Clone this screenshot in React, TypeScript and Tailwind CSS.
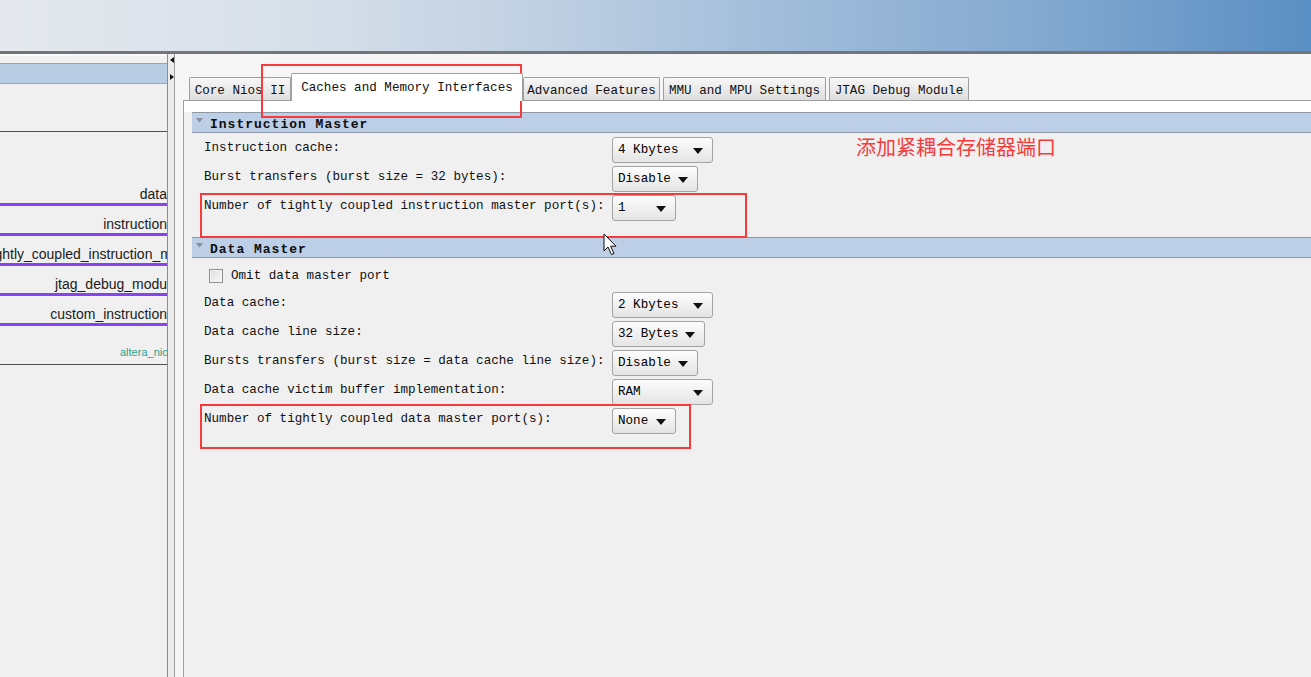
import React from 'react';

const mono = "font-['Liberation_Mono','Courier_New',monospace]";

type Row = { label: string; value: string; width: string };

const instructionRows: Row[] = [
  { label: 'Instruction cache:', value: '4 Kbytes', width: 'w-[101px]' },
  { label: 'Burst transfers (burst size = 32 bytes):', value: 'Disable', width: 'w-[86px]' },
  { label: 'Number of tightly coupled instruction master port(s):', value: '1', width: 'w-[64px]' },
];

const dataRows: Row[] = [
  { label: 'Data cache:', value: '2 Kbytes', width: 'w-[101px]' },
  { label: 'Data cache line size:', value: '32 Bytes', width: 'w-[93px]' },
  { label: 'Bursts transfers (burst size = data cache line size):', value: 'Disable', width: 'w-[86px]' },
  { label: 'Data cache victim buffer implementation:', value: 'RAM', width: 'w-[101px]' },
  { label: 'Number of tightly coupled data master port(s):', value: 'None', width: 'w-[64px]' },
];

const ports = [
  { name: 'data', clip: '' },
  { name: 'instruction', clip: '' },
  { name: 'tightly_coupled_instruction_master', clip: 'mr-[-36px]' },
  { name: 'jtag_debug_module', clip: 'mr-[-11px]' },
  { name: 'custom_instruction', clip: '' },
];

const tabs = [
  { label: 'Core Nios II', cls: 'w-[102px] ml-[3px]', active: false },
  { label: 'Caches and Memory Interfaces', cls: 'w-[232px]', active: true },
  { label: 'Advanced Features', cls: 'w-[137px]', active: false },
  { label: 'MMU and MPU Settings', cls: 'w-[163px] ml-[3px]', active: false },
  { label: 'JTAG Debug Module', cls: 'w-[140px] ml-[3px]', active: false },
];

const Dropdown = ({ value, width }: { value: string; width: string }) => (
  <div
    className={`${width} h-[26px] flex items-center justify-between pl-[5px] pr-[9px] pt-px rounded-[3px] border border-[#a3a3a3] bg-gradient-to-b from-[#fdfdfd] to-[#e4e4e4] text-black`}
  >
    <span>{value}</span>
    <svg width="10" height="6" viewBox="0 0 10 6">
      <path d="M0 0 H10 L5 6 Z" fill="#111" />
    </svg>
  </div>
);

const SectionHeader = ({ title }: { title: string }) => (
  <div className="relative h-[21px] flex items-end bg-[#bccfe6] border-y border-[#8e99a6]">
    <svg className="absolute left-[4px] top-[5px]" width="7" height="5" viewBox="0 0 7 5">
      <path d="M0 0 H7 L3.5 4.5 Z" fill="#8a8f96" />
    </svg>
    <span className="ml-[18px] text-[13px] leading-[15px] font-bold tracking-[1px] text-[#0d0d0d]">
      {title}
    </span>
  </div>
);

const SettingRow = ({ row }: { row: Row }) => (
  <div className="flex items-start h-[29px] pl-[12px]">
    <div className="w-[408px] pt-[3px] leading-[16px] whitespace-pre text-[#111]">{row.label}</div>
    <Dropdown value={row.value} width={row.width} />
  </div>
);

const Cursor = () => (
  <svg
    className="absolute left-[603px] top-[233px]"
    width="15"
    height="24"
    viewBox="0 0 15 24"
  >
    <path
      d="M1 1 L1 18 L5 14 L8.5 21.5 L11 20.5 L7.6 13.2 L13 13.2 Z"
      fill="#fff"
      stroke="#111"
      strokeWidth="1"
      strokeLinejoin="round"
    />
  </svg>
);

export default function App() {
  return (
    <div className="relative w-[1311px] h-[677px] overflow-hidden flex flex-col bg-[#f0f0f0]">
      {/* window title strip */}
      <div className="h-[51px] shrink-0 bg-[linear-gradient(to_right,#e5e9ee_0%,#d5dee8_25%,#bfcfe2_42%,#a3bedb_58%,#86aad0_78%,#5a8fc3_100%)]" />
      <div className="h-[3px] shrink-0 bg-[#70767c]" />

      <div className="flex flex-1 min-h-0">
        {/* schematic panel */}
        <div className="w-[168px] shrink-0 flex flex-col overflow-hidden border-r border-[#8c8c8c] bg-[#f0f0f0] font-['Liberation_Sans',Arial,sans-serif]">
          <div className="h-[9px] shrink-0 border-t-2 border-[#fbfbfb]" />
          <div className="h-[21px] shrink-0 bg-[#b8cce4] border-y border-[#99a5b2]" />
          <div className="h-[48px] shrink-0 border-b border-[#4d4d4d]" />
          <div className="h-[44px] shrink-0" />
          {ports.map((p) => (
            <div key={p.name} className="shrink-0">
              <div className="h-[27px] flex items-end justify-end pb-[1px] overflow-hidden">
                <span className={`whitespace-nowrap text-[14px] leading-[16px] text-[#1a1a1a] ${p.clip}`}>
                  {p.name}
                </span>
              </div>
              <div className="h-[3px] bg-[#8742f1]" />
            </div>
          ))}
          <div className="h-[39px] shrink-0 flex items-end pb-[5px] border-b border-[#4d4d4d]">
            <span className="ml-[120px] whitespace-nowrap text-[11px] leading-[13px] text-[#2f9f90]">
              altera_nios2_qsys
            </span>
          </div>
        </div>

        {/* splitter */}
        <div className="w-[6px] shrink-0 bg-[#ececec] flex flex-col pt-[3px] gap-[11px]">
          <svg className="ml-[2px]" width="4" height="6" viewBox="0 0 4 6">
            <path d="M4 0 V6 L0 3 Z" fill="#111" />
          </svg>
          <svg className="ml-[2px]" width="4" height="6" viewBox="0 0 4 6">
            <path d="M0 0 V6 L4 3 Z" fill="#111" />
          </svg>
        </div>

        {/* parameter editor */}
        <div className={`flex-1 min-w-0 flex flex-col border-l border-[#9b9b9b] bg-[#f6f6f6] pl-[8px] pt-[19px] text-[12.6px] ${mono}`}>
          <div className="h-[27px] shrink-0 flex items-end pl-[3px]">
            {tabs.map((t) =>
              t.active ? (
                <div
                  key={t.label}
                  className={`${t.cls} relative z-10 -mb-px h-[28px] shrink-0 flex items-center justify-center pt-[2px] bg-white border border-b-0 border-[#a0a0a0] rounded-t-[2px] whitespace-nowrap text-[#111]`}
                >
                  {t.label}
                </div>
              ) : (
                <div
                  key={t.label}
                  className={`${t.cls} h-[23px] shrink-0 flex items-center justify-center pt-[4px] bg-gradient-to-b from-[#f7f7f7] to-[#dedede] border border-b-0 border-[#9f9f9f] rounded-t-[2px] whitespace-nowrap text-[#111]`}
                >
                  {t.label}
                </div>
              ),
            )}
          </div>

          <div className="flex-1 flex flex-col border-l border-t border-[#a0a0a0] bg-[#f0f0f0]">
            <div className="h-[11px] shrink-0 bg-white" />
            <div className="pl-[8px]">
              <SectionHeader title="Instruction Master" />
              <div className="mt-[4px] mb-[13px]">
                {instructionRows.map((r) => (
                  <SettingRow key={r.label} row={r} />
                ))}
              </div>

              <SectionHeader title="Data Master" />
              <div className="mt-[7px] h-[22px] flex items-center pl-[17px] gap-[8px]">
                <div className="w-[14px] h-[14px] border border-[#8e8f8f] bg-gradient-to-br from-[#dcdcdc] to-[#fafafa] shadow-[inset_0_0_0_1px_#f4f4f4]" />
                <span className="text-[#111]">Omit data master port</span>
              </div>
              <div className="mt-[5px]">
                {dataRows.map((r) => (
                  <SettingRow key={r.label} row={r} />
                ))}
              </div>
            </div>
          </div>
        </div>
      </div>

      {/* red annotations drawn over the capture */}
      <div className="absolute left-[261px] top-[64px] w-[261px] h-[54px] border-2 border-[#f53b3b]" />
      <div className="absolute left-[200px] top-[193px] w-[547px] h-[45px] border-2 border-[#f53b3b]" />
      <div className="absolute left-[200px] top-[404px] w-[491px] h-[45px] border-2 border-[#f53b3b]" />
      <div className="absolute left-[856px] top-[136px] text-[20px] leading-[22px] text-[#f43c3c] font-['Noto_Sans_CJK_SC',sans-serif]">
        添加紧耦合存储器端口
      </div>

      <Cursor />
    </div>
  );
}
